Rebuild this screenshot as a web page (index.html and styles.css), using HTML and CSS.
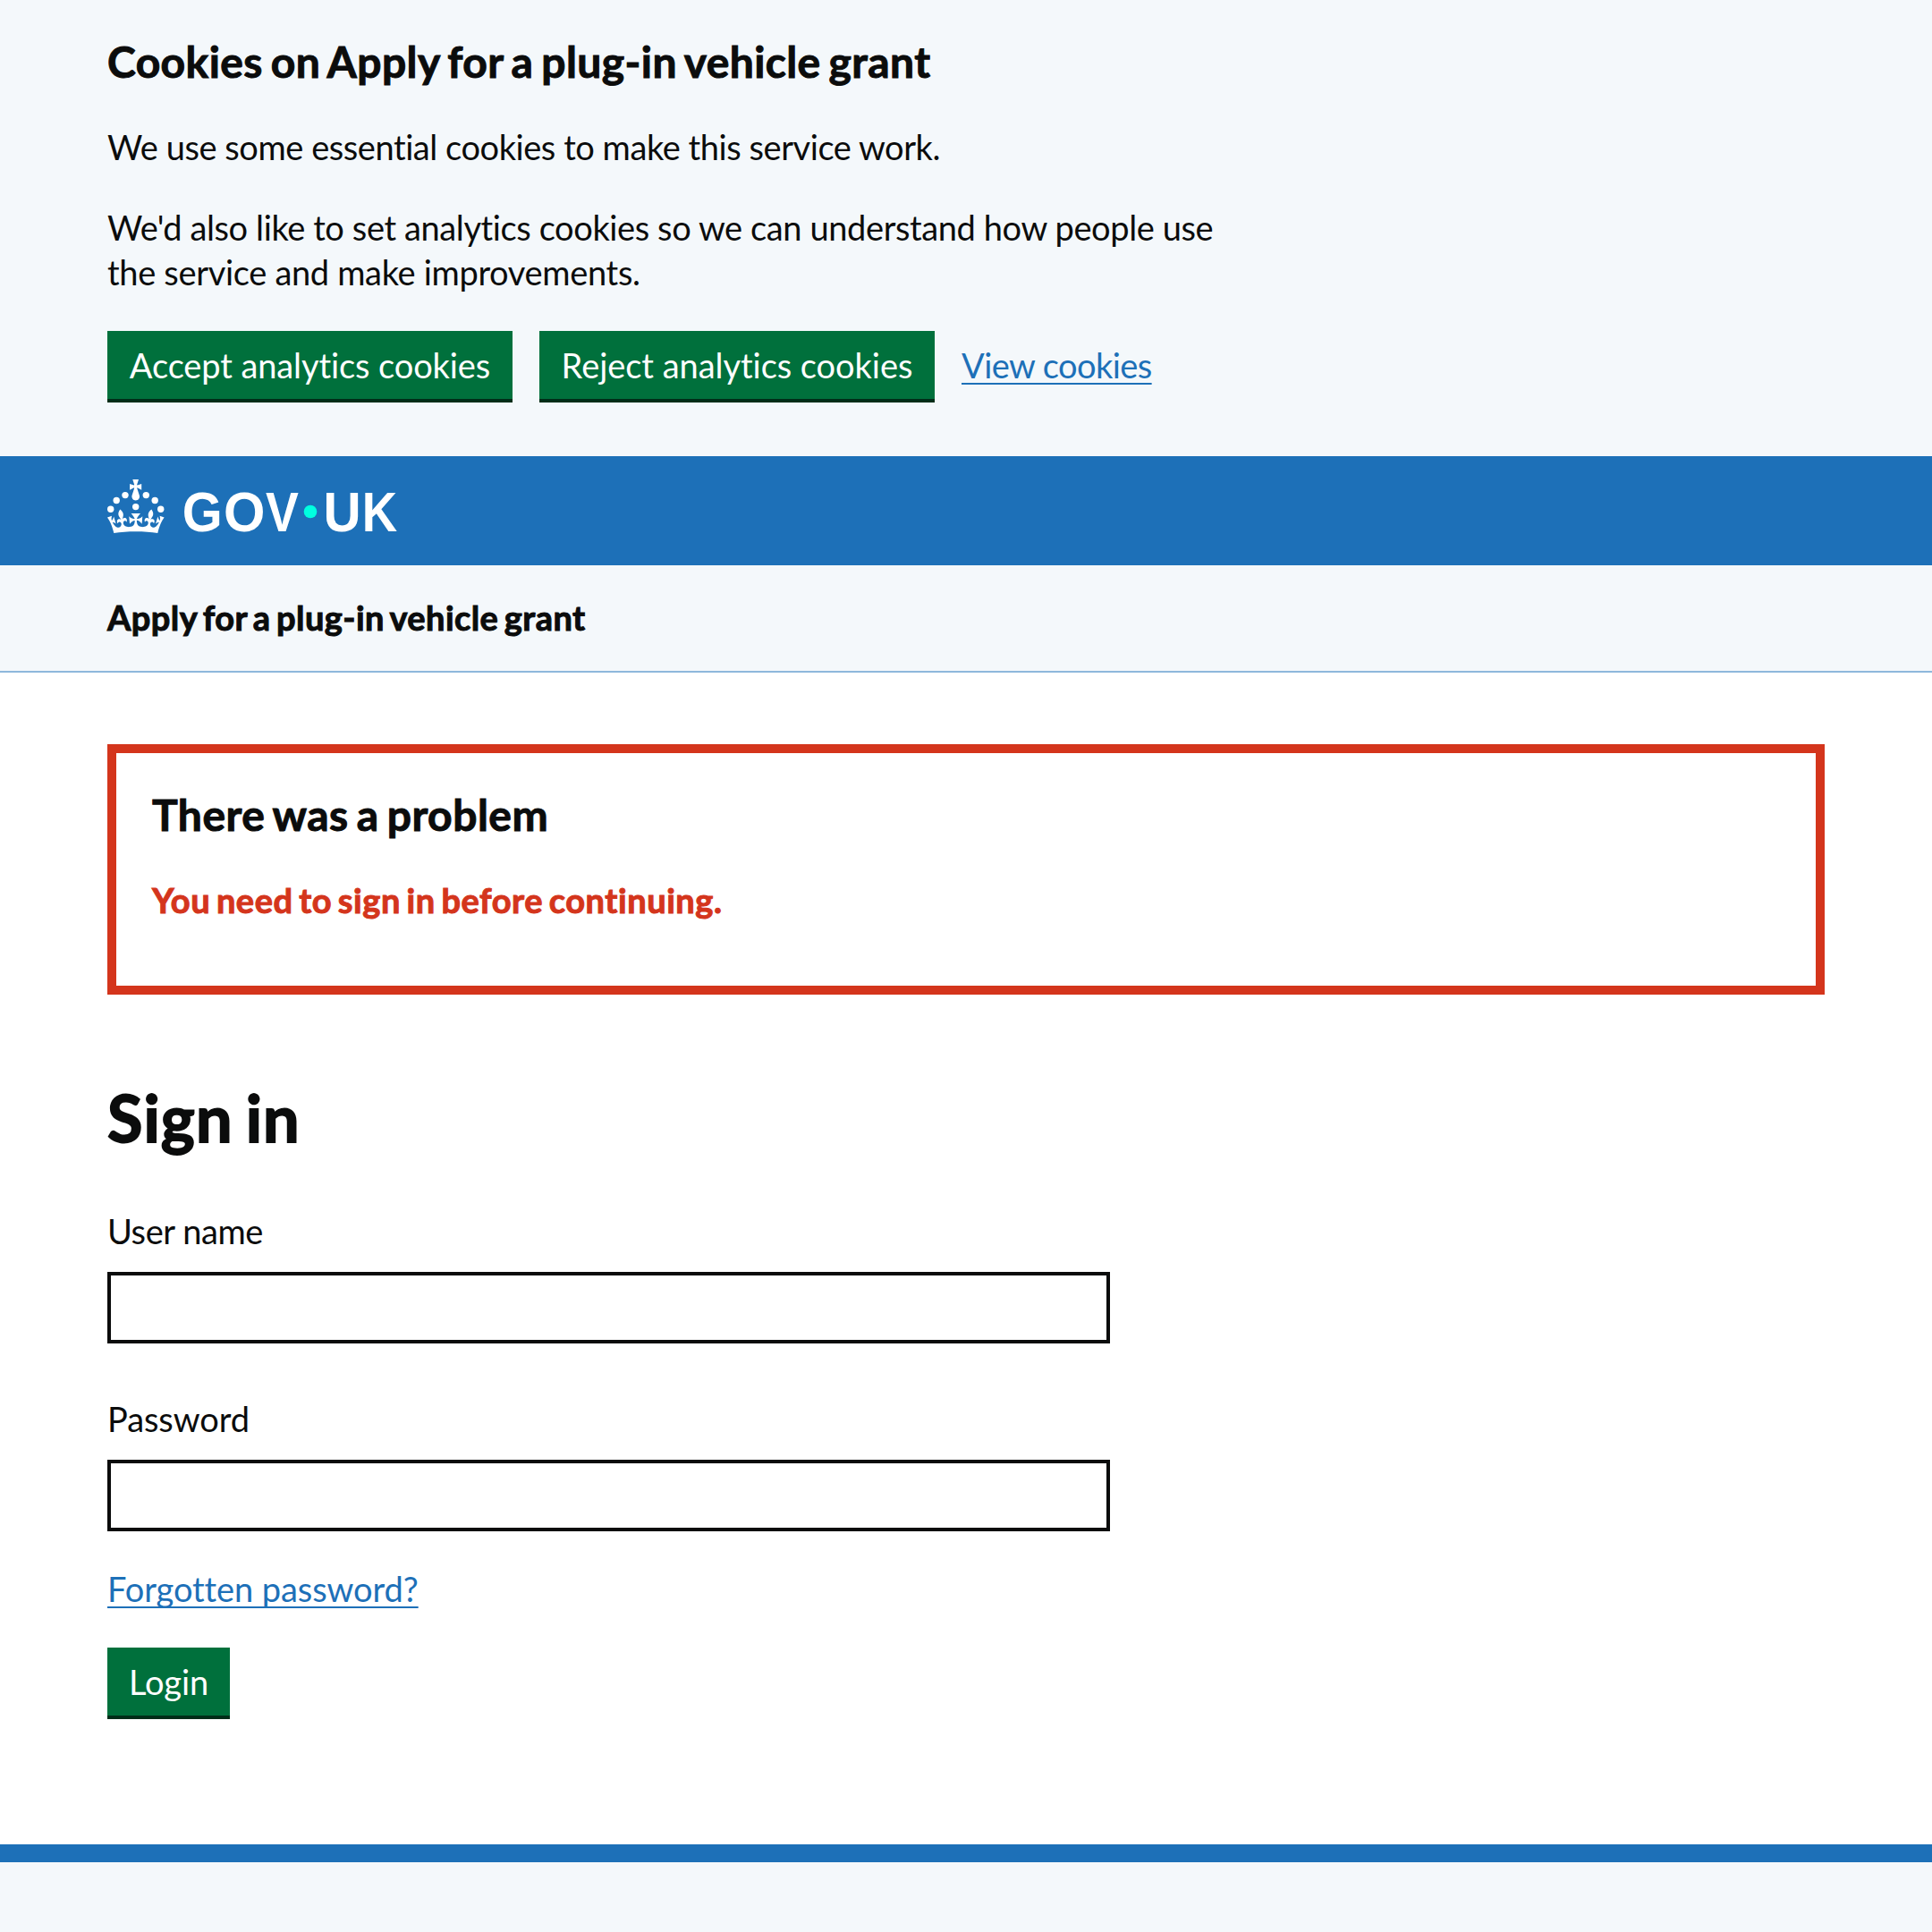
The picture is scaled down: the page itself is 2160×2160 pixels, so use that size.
FILE: index.html
```
<!DOCTYPE html>
<html lang="en">
<head>
<meta charset="utf-8">
<title>Sign in - Apply for a plug-in vehicle grant</title>
<link rel="stylesheet" href="styles.css">
</head>
<body>
<section class="cookie-banner">
  <h2 class="heading-m cookie-title">Cookies on Apply for a plug-in vehicle grant</h2>
  <p class="text cookie-line-1">We use some essential cookies to make this service work.</p>
  <p class="text cookie-line-2">We'd also like to set analytics cookies so we can understand how people use<br><span class="cookie-line-3">the service and make improvements.</span></p>
  <div class="button-group">
    <button class="button button-accept" type="button">Accept analytics cookies</button>
    <button class="button button-reject" type="button">Reject analytics cookies</button>
    <a class="link link-cookies" href="#">View cookies</a>
  </div>
</section>
<header class="header">
  <svg class="logo" width="324" height="60" viewBox="0 0 324 60" role="img" aria-label="GOV.UK">
    <g fill="#fff">
      <circle cx="20" cy="17.6" r="3.7"/>
      <circle cx="10.2" cy="23.5" r="3.7"/>
      <circle cx="3.7" cy="33.2" r="3.7"/>
      <circle cx="31.7" cy="30.6" r="3.7"/>
      <circle cx="43.3" cy="17.6" r="3.7"/>
      <circle cx="53.2" cy="23.5" r="3.7"/>
      <circle cx="59.7" cy="33.2" r="3.7"/>
      <path d="M33.1,9.8c.2-.1.3-.3.5-.5l4.6,2.4v-6.8l-4.6,1.5c-.1-.2-.3-.3-.5-.5l1.9-5.9h-6.7l1.9,5.9c-.2.1-.3.3-.5.5l-4.6-1.5v6.8l4.6-2.4c.1.2.3.3.5.5l-2.6,8c-.9,2.8,1.2,5.7,4.1,5.7h0c3,0,5.1-2.9,4.1-5.7l-2.6-8ZM37,37.9s-3.4,3.8-4.1,6.1c2.2,0,4.2-.5,6.4-2.8l-.7,8.5c-2-2.8-4.4-4.1-5.7-3.8.1,3.1.5,6.7,5.8,7.2,3.7.3,6.7-1.5,7-3.8.4-2.6-2-4.3-3.7-1.6-1.4-4.5,2.4-6.1,4.9-3.2-1.9-4.5-1.8-7.7,2.4-10.9,3,4,2.6,7.3-1.2,11.1,2.4-1.3,6.2,0,4,4.6-1.2-2.8-3.7-2.2-4.2.2-.3,1.7.7,3.7,3,4.2,1.9.3,4.7-.9,7-5.9-1.3,0-2.4.7-3.9,1.7l2.4-8c.6,2.3,1.4,3.7,2.2,4.5.6-1.6.5-2.8,0-5.3l5,1.8c-2.6,3.6-5.2,8.7-7.3,17.5-7.4-1.1-15.7-1.7-24.5-1.7h0c-8.8,0-17.1.6-24.5,1.7-2.1-8.9-4.7-13.9-7.3-17.5l5-1.8c-.5,2.5-.6,3.7,0,5.3.8-.8,1.6-2.3,2.2-4.5l2.4,8c-1.5-1-2.6-1.7-3.9-1.7,2.3,5,5.2,6.2,7,5.9,2.3-.4,3.3-2.4,3-4.2-.5-2.4-3-3.1-4.2-.2-2.2-4.6,1.6-6,4-4.6-3.7-3.7-4.2-7.1-1.2-11.1,4.2,3.2,4.3,6.4,2.4,10.9,2.5-2.8,6.3-1.3,4.9,3.2-1.8-2.7-4.1-1-3.7,1.6.3,2.3,3.3,4.1,7,3.8,5.4-.5,5.7-4.2,5.8-7.2-1.3-.2-3.7,1-5.7,3.8l-.7-8.5c2.2,2.3,4.2,2.7,6.4,2.8-.7-2.3-4.1-6.1-4.1-6.1h10.6,0Z"/>
    </g>
    <circle cx="227" cy="36" r="7.3" fill="#00ffe0"/>
    <g class="wordmark">
      <text transform="translate(83.7 58.2) scale(.91 1)">G</text>
      <text transform="translate(130 58.2) scale(.94 1)">O</text>
      <text transform="translate(177 58.2) scale(.87 1)">V</text>
      <text transform="translate(241.6 58.2) scale(.92 1)">U</text>
      <text transform="translate(284.8 58.2) scale(.86 1)">K</text>
    </g>
  </svg>
</header>
<div class="service-bar"><span class="service-name">Apply for a plug-in vehicle grant</span></div>
<main class="main">
  <section class="error-summary">
    <h2 class="heading-m error-title">There was a problem</h2>
    <p class="error-message">You need to sign in before continuing.</p>
  </section>
  <h1 class="heading-l">Sign in</h1>
  <form class="form">
    <div class="field">
      <label class="text label-user" for="user">User name</label>
      <input class="input" id="user" type="text">
    </div>
    <div class="field">
      <label class="text label-password" for="password">Password</label>
      <input class="input" id="password" type="password">
    </div>
    <a class="link link-forgotten" href="#">Forgotten password?</a>
    <button class="button button-login" type="button">Login</button>
  </form>
</main>
<footer class="footer"></footer>
</body>
</html>
```
FILE: styles.css
```
* { box-sizing: border-box; }
html { height: 100%; }
body {
  margin: 0;
  height: 2160px;
  display: flex;
  flex-direction: column;
  overflow: hidden;
  background: #fff;
  color: #0b0c0c;
  font: 400 38px/50px Lato, "Liberation Sans", sans-serif;
  font-variant-ligatures: none;
}
h1, h2, p { margin: 0; }

.heading-l, .heading-m, .service-name, .error-message {
  font-weight: 700;
  word-spacing: -3.1px;
  -webkit-text-stroke: 1px currentColor;
}
.heading-m { font-size: 48px; line-height: 60px; }
.heading-l {
  margin-top: 97px;
  font-size: 72px;
  line-height: 80px;
  letter-spacing: 1.1px;
  word-spacing: -4.6px;
  -webkit-text-stroke-width: 1.8px;
}

.cookie-banner { height: 510px; padding: 39px 120px 0; background: #f4f8fb; }
.cookie-title { margin-bottom: 40px; letter-spacing: 0.4px; }
.cookie-line-1 { margin-bottom: 40px; letter-spacing: -0.44px; }
.cookie-line-2 { margin-bottom: 41px; letter-spacing: -0.392px; white-space: nowrap; }
.cookie-line-3 { letter-spacing: -0.326px; }

.button-group { display: flex; gap: 30px; }
.button {
  height: 80px;
  padding: 13px 0;
  border: 0;
  border-bottom: 4px solid #002d18;
  background: #00703c;
  color: #fff;
  font: inherit;
  text-align: center;
  white-space: nowrap;
}
.button-accept { width: 453px; letter-spacing: -0.1px; }
.button-reject { width: 442px; letter-spacing: -0.04px; }
.button-login { width: 137px; margin-top: -18px; letter-spacing: -0.1px; }

.link {
  color: #1d70b8;
  text-decoration: underline 2px;
  text-underline-offset: 5px;
  text-decoration-skip-ink: none;
}
.link-cookies { margin-top: 13px; letter-spacing: -0.56px; }
.link-forgotten { margin-top: -20px; letter-spacing: -0.08px; }

.header { height: 122px; padding: 26px 120px 0; background: #1d70b8; }
.logo { display: block; overflow: visible; }
.wordmark {
  fill: #fff;
  font: 700 63.5px "Liberation Sans", Arial, sans-serif;
}

.service-bar {
  height: 120px;
  padding: 33px 120px 0;
  border-bottom: 2px solid #8eb8dc;
  background: #f4f8fb;
}
.service-name { letter-spacing: 0.42px; }

.main { height: 1310px; padding: 80px 120px 0; }
.error-summary {
  height: 280px;
  padding: 39px 40px 0;
  border: 10px solid #d4351c;
}
.error-title { margin-bottom: 40px; letter-spacing: 0.5px; }
.error-message { color: #d4351c; letter-spacing: 0.54px; }

.form { display: flex; flex-direction: column; align-items: flex-start; margin-top: 62px; gap: 59px; }
.field { display: flex; flex-direction: column; gap: 21px; }
.label-user { letter-spacing: -0.43px; }
.label-password { letter-spacing: -0.06px; }
.input {
  width: 1121px;
  height: 80px;
  padding: 10px;
  border: 4px solid #0b0c0c;
  border-radius: 0;
  background: #fff;
  font: inherit;
}

.footer { flex: 1; border-top: 20px solid #1d70b8; background: #f4f8fb; }
```
